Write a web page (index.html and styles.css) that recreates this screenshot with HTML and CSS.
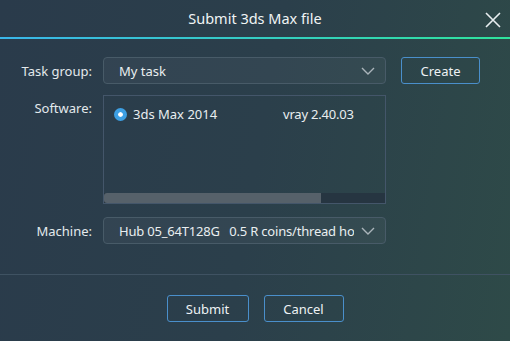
FILE: index.html
```html
<!DOCTYPE html>
<html lang="en">
<head>
  <meta charset="UTF-8" />
  <title>Submit 3ds Max file</title>
  <link rel="stylesheet" href="styles.css">
</head>
<body>
  <div class="dialog">
    <header class="title-bar">
      <span class="title">Submit 3ds Max file</span>
      <button class="close-btn" aria-label="Close">
        <svg width="16" height="16" viewBox="0 0 16 16"><path d="M1 1 L15 15 M15 1 L1 15" stroke="#e8eef0" stroke-width="1.6" fill="none"/></svg>
      </button>
    </header>

    <main class="form">
      <div class="row">
        <label class="label">Task group:</label>
        <div class="select">
          <span class="select-text">My task</span>
          <svg class="chevron" width="14" height="8" viewBox="0 0 14 8"><path d="M1 1 L7 7 L13 1" stroke="#aab4ba" stroke-width="1.4" fill="none"/></svg>
        </div>
        <button class="btn create-btn">Create</button>
      </div>

      <div class="row row-top">
        <label class="label label-top">Software:</label>
        <div class="list-box">
          <div class="list-items">
            <div class="list-item">
              <span class="radio"></span>
              <span class="soft-name">3ds Max 2014</span>
              <span class="plugin">vray 2.40.03</span>
            </div>
          </div>
          <div class="scrollbar"><div class="thumb"></div></div>
        </div>
      </div>

      <div class="row">
        <label class="label">Machine:</label>
        <div class="select">
          <span class="select-text machine-text">Hub 05_64T128G&nbsp;&nbsp;&nbsp;0.5 R coins/thread hour</span>
          <svg class="chevron" width="14" height="8" viewBox="0 0 14 8"><path d="M1 1 L7 7 L13 1" stroke="#aab4ba" stroke-width="1.4" fill="none"/></svg>
        </div>
      </div>
    </main>

    <footer class="footer">
      <button class="btn">Submit</button>
      <button class="btn">Cancel</button>
    </footer>
  </div>
</body>
</html>
```

FILE: styles.css
```css
* { box-sizing: border-box; }
html, body {
  margin: 0;
  height: 100%;
}
body {
  font-family: "Noto Sans", "Liberation Sans", sans-serif;
  font-size: 13px;
  color: #e9eef0;
  background: linear-gradient(100deg, #2a3b4b 0%, #2b3f4b 50%, #2e4a48 100%);
  overflow: hidden;
}
.dialog {
  width: 510px;
  height: 341px;
  display: flex;
  flex-direction: column;
}
.title-bar {
  height: 39px;
  display: flex;
  align-items: center;
  justify-content: center;
  position: relative;
  border-bottom: 2px solid;
  border-image: linear-gradient(90deg, #3ab6ea, #2fe39c) 1;
  padding-bottom: 2px;
}
.title {
  font-size: 14.5px;
  color: #f0f4f5;
}
.close-btn {
  position: absolute;
  right: 9px;
  top: 12px;
  background: none;
  border: none;
  padding: 0;
  width: 16px;
  height: 16px;
  cursor: pointer;
}
.form {
  padding: 18px 0 0 0;
  height: 236px;
  border-bottom: 1px solid #3f5262;
}
.row {
  display: flex;
  align-items: center;
  margin-bottom: 11px;
}
.row-top { align-items: flex-start; margin-bottom: 13px; }
.label {
  width: 92px;
  text-align: right;
  margin-right: 11px;
  color: #e3e9ec;
}
.label-top { margin-top: 4px; }
.select {
  width: 283px;
  height: 27px;
  border: 1px solid #485b68;
  border-radius: 4px;
  background: rgba(255, 255, 255, 0.04);
  display: flex;
  align-items: center;
  padding: 0 10px 0 15px;
}
.select-text {
  flex: 1;
  white-space: nowrap;
  overflow: hidden;
  margin-right: 10px;
}
.machine-text {
  letter-spacing: -0.2px;
  margin-right: 7px;
}
.chevron { flex: none; }
.btn {
  font-family: inherit;
  font-size: 13px;
  color: #eef2f4;
  background: transparent;
  border: 1px solid #4a8fcb;
  border-radius: 3px;
  height: 27px;
  cursor: pointer;
}
.create-btn {
  width: 79px;
  margin-left: 15px;
}
.list-box {
  width: 283px;
  height: 109px;
  border: 1px solid #44566a;
  display: flex;
  flex-direction: column;
}
.list-items {
  flex: 1;
  padding: 9px 10px 0 10px;
}
.list-item {
  display: flex;
  align-items: center;
}
.radio {
  width: 13px;
  height: 13px;
  border-radius: 50%;
  background: #3d9fe3;
  border: 4px solid #3d9fe3;
  box-shadow: inset 0 0 0 10px #ffffff;
  margin-right: 6px;
}
.soft-name { width: 150px; }
.plugin { letter-spacing: -0.2px; }
.scrollbar {
  height: 10px;
  background: #263541;
}
.thumb {
  width: 217px;
  height: 10px;
  background: #56616a;
  border-radius: 3px 0 0 3px;
}
.footer {
  display: flex;
  justify-content: center;
  gap: 15px;
  padding-top: 20px;
}
.footer .btn {
  width: 82px;
}
.footer .btn + .btn { width: 80px; }
```
